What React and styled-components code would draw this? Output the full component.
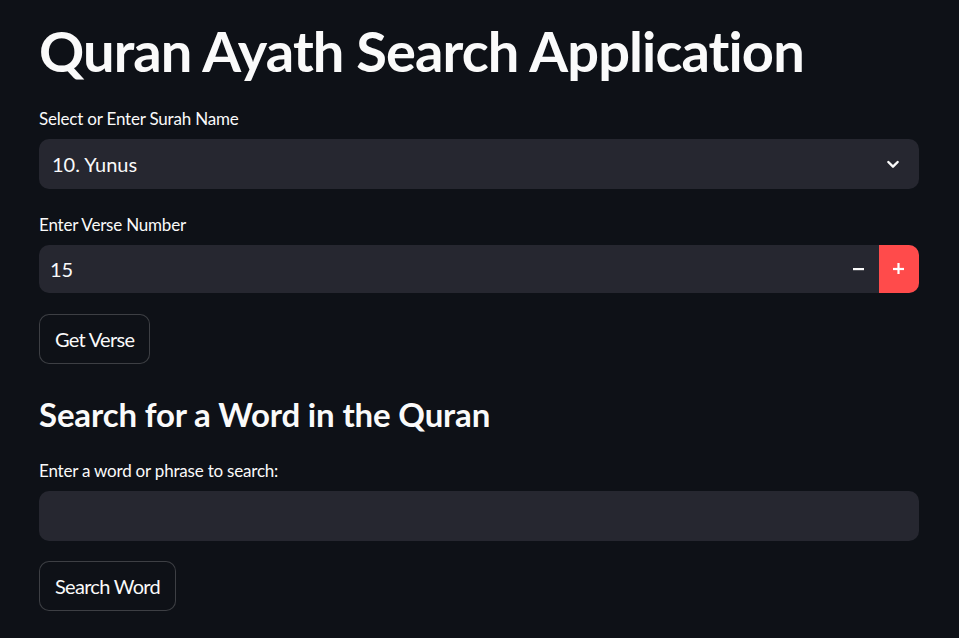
import React, { useState } from "react";
import styled, { createGlobalStyle } from "styled-components";

const Global = createGlobalStyle`
  html, body {
    margin: 0;
    padding: 0;
    background: #0e1117;
  }
  body {
    font-family: Lato, "Liberation Sans", sans-serif;
    color: #fafafa;
  }
`;

const Page = styled.main`
  min-height: 638px;
  box-sizing: border-box;
  padding: 17px 40px 0 39px;
  display: flex;
  flex-direction: column;
`;

const Title = styled.h1`
  margin: 0;
  font-size: 56px;
  line-height: 67px;
  font-weight: 700;
  letter-spacing: -0.9px;
  white-space: nowrap;
`;

const SubTitle = styled.h2`
  margin: 30px 0 0;
  font-size: 33px;
  line-height: 40px;
  font-weight: 700;
  letter-spacing: -0.15px;
`;

const Field = styled.div`
  margin-top: ${(p) => p.$top}px;
  display: flex;
  flex-direction: column;
`;

const Label = styled.label`
  font-size: 17px;
  line-height: 22px;
  margin-bottom: 9px;
  letter-spacing: -0.2px;
  color: #fafafa;
`;

const Box = styled.div`
  height: ${(p) => p.$h}px;
  box-sizing: border-box;
  background: #262730;
  border-radius: 10px;
  display: flex;
  align-items: center;
  overflow: hidden;
  font-size: 20px;
  color: #fafafa;
`;

const Value = styled.span`
  flex: 1;
  padding-left: ${(p) => p.$pad}px;
`;

const Chevron = styled.span`
  width: 52px;
  display: flex;
  justify-content: center;
`;

const StepButton = styled.button`
  width: 40px;
  height: 100%;
  border: none;
  padding: 0;
  background: ${(p) => (p.$active ? "#ff4b4b" : "#262730")};
  color: #fafafa;
  display: flex;
  align-items: center;
  justify-content: center;
  cursor: pointer;
`;

const Button = styled.button`
  align-self: flex-start;
  margin-top: ${(p) => p.$top}px;
  height: 50px;
  padding: 0 15px;
  box-sizing: border-box;
  border: 1px solid rgba(250, 250, 250, 0.2);
  border-radius: 10px;
  background: #0e1117;
  color: #fafafa;
  font-family: inherit;
  font-size: 20px;
  letter-spacing: -0.7px;
  cursor: pointer;
`;

const Down = () => (
  <svg width="16" height="16" viewBox="0 0 24 24" fill="none" stroke="#fafafa" strokeWidth="3.6" strokeLinecap="round" strokeLinejoin="round">
    <path d="M5 9l7 7 7-7" />
  </svg>
);

const Minus = () => (
  <svg width="12" height="12" viewBox="0 0 12 12">
    <rect x="0" y="5" width="11" height="2.2" fill="#fafafa" />
  </svg>
);

const Plus = () => (
  <svg width="12" height="12" viewBox="0 0 12 12">
    <rect x="0" y="4.9" width="11" height="2.2" fill="#fff" />
    <rect x="4.4" y="0" width="2.2" height="11" fill="#fff" />
  </svg>
);

export default function App() {
  const [verse, setVerse] = useState(15);
  return (
    <>
      <Global />
      <Page>
        <Title>Quran Ayath Search Application</Title>

        <Field $top={24}>
          <Label>Select or Enter Surah Name</Label>
          <Box $h={50}>
            <Value $pad={13}>10. Yunus</Value>
            <Chevron>
              <Down />
            </Chevron>
          </Box>
        </Field>

        <Field $top={25}>
          <Label>Enter Verse Number</Label>
          <Box $h={48}>
            <Value $pad={11}>{verse}</Value>
            <StepButton onClick={() => setVerse(verse - 1)}>
              <Minus />
            </StepButton>
            <StepButton $active onClick={() => setVerse(verse + 1)}>
              <Plus />
            </StepButton>
          </Box>
        </Field>

        <Button $top={21}>Get Verse</Button>

        <SubTitle>Search for a Word in the Quran</SubTitle>

        <Field $top={26}>
          <Label>Enter a word or phrase to search:</Label>
          <Box $h={50} />
        </Field>

        <Button $top={20}>Search Word</Button>
      </Page>
    </>
  );
}
